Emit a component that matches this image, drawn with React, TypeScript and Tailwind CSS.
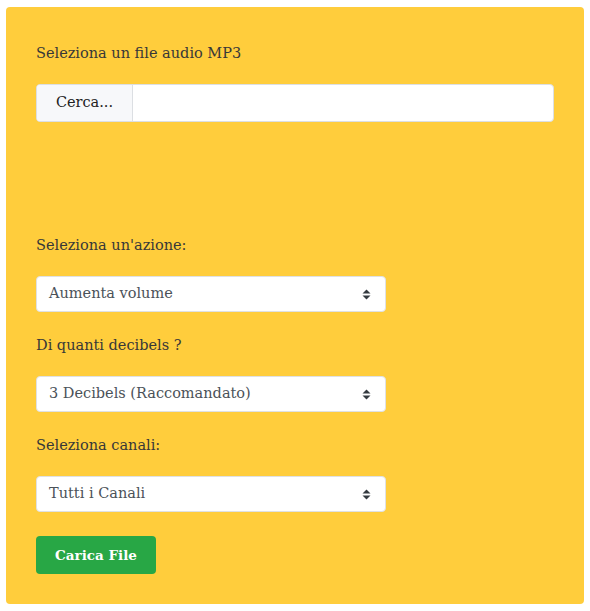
import React from 'react'

const SelectBox = ({ value }: { value: string }) => (
  <div className="flex h-[36px] w-[350px] items-center justify-between rounded-[4px] border border-[#dfe1e4] bg-white pl-[12px] pr-[14px] text-[14.5px] text-[#4b5259]">
    <span>{value}</span>
    <svg width="9" height="11" viewBox="0 0 9 11" className="text-[#343a40]">
      <path d="M4.5 0.5L8.5 4.5H0.5Z M4.5 10.5L0.5 6.5H8.5Z" fill="currentColor" />
    </svg>
  </div>
)

export default function App() {
  return (
    <div className="min-h-[611px] bg-white pt-[7px] pl-[6px] font-['DejaVu_Serif',serif]">
      <div className="flex w-[578px] flex-col rounded-[4px] bg-[#ffcd3c] px-[30px] pt-[34px] pb-[30px] text-[14.5px] text-[#383838]">
        <label className="leading-[24px]">Seleziona un file audio MP3</label>
        <div className="mt-[19px] flex h-[38px] w-[518px] overflow-hidden rounded-[4px] border border-[#dcdfe3] bg-white">
          <div className="flex w-[96px] items-center justify-center border-r border-[#dcdfe3] bg-[#f7f8fa] text-[#222]">
            Cerca...
          </div>
          <div className="flex-1" />
        </div>

        <label className="mt-[111px] leading-[24px]">Seleziona un'azione:</label>
        <div className="mt-[19px]">
          <SelectBox value="Aumenta volume" />
        </div>

        <label className="mt-[21px] leading-[24px]">Di quanti decibels ?</label>
        <div className="mt-[19px]">
          <SelectBox value="3 Decibels (Raccomandato)" />
        </div>

        <label className="mt-[21px] leading-[24px]">Seleziona canali:</label>
        <div className="mt-[19px]">
          <SelectBox value="Tutti i Canali" />
        </div>

        <div className="mt-[24px]">
          <button className="h-[38px] w-[120px] rounded-[4px] bg-[#28a745] text-[13.5px] font-bold text-white">
            Carica File
          </button>
        </div>
      </div>
    </div>
  )
}
